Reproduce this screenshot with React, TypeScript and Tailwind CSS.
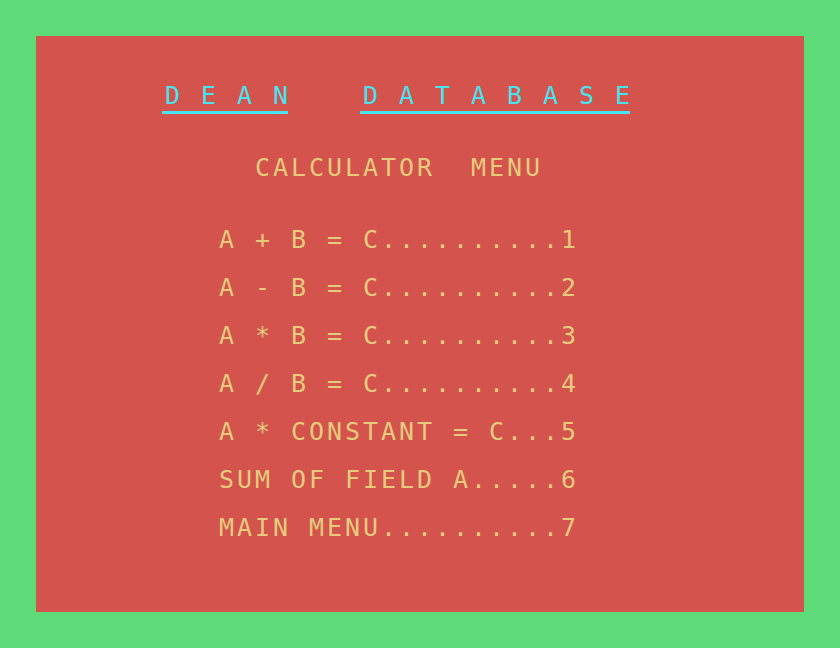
const ITEMS = [
  'A + B = C..........1',
  'A - B = C..........2',
  'A * B = C..........3',
  'A / B = C..........4',
  'A * CONSTANT = C...5',
  'SUM OF FIELD A.....6',
  'MAIN MENU..........7',
]

const mono = "font-['DejaVu_Sans_Mono',monospace] text-[25px] tracking-[2.95px] whitespace-pre"

export default function App() {
  return (
    <div className="w-[840px] h-[648px] bg-[#5edb78] p-[36px]">
      <div className={`w-[768px] h-[576px] bg-[#d4534c] pt-[48px] pl-[126px] ${mono}`}>
        {/* title */}
        <div className="flex leading-[24px] text-[#46e4f0]">
          <span className="block w-[126px] h-[30px] pl-[3px] border-b-[3px] border-[#46e4f0]">D E A N</span>
          <span className="block w-[270px] h-[30px] pl-[3px] ml-[72px] border-b-[3px] border-[#46e4f0]">D A T A B A S E</span>
        </div>

        <div className="mt-[42px] ml-[93px] h-[24px] leading-[24px] text-[#e6cb7d]">CALCULATOR  MENU</div>

        <div className="mt-[48px] ml-[57px] flex flex-col gap-[24px] text-[#e6cb7d]">
          {ITEMS.map((t) => (
            <div key={t} className="h-[24px] leading-[24px]">{t}</div>
          ))}
        </div>
      </div>
    </div>
  )
}
